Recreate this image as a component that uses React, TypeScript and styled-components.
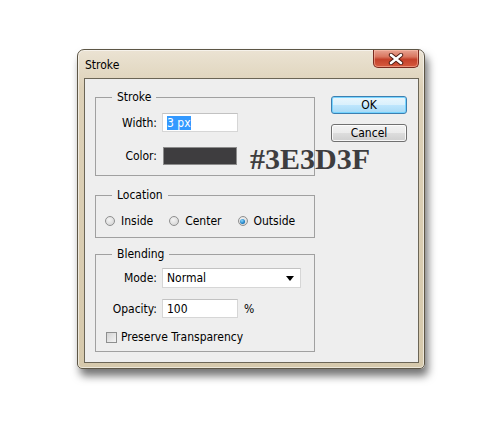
import { createGlobalStyle } from 'styled-components';
import styled from 'styled-components';

const GlobalStyle = createGlobalStyle`
  body {
    margin: 0;
    background: #ffffff;
    font-family: "DejaVu Sans Condensed", "DejaVu Sans", "Noto Sans", sans-serif;
    font-size: 11px;
    color: #000;
  }
`;

const Page = styled.div`
  width: 503px;
  height: 422px;
  padding: 49px 0 0 77px;
  box-sizing: border-box;
`;

const Frame = styled.div`
  width: 348px;
  height: 320px;
  box-sizing: border-box;
  border: 1px solid #5d5646;
  border-radius: 7px 7px 5px 5px;
  background: linear-gradient(180deg, #ebe3d3 0%, #ddd1b8 12%, #d6c9ac 100%);
  box-shadow: 3px 7px 9px rgba(0, 0, 0, 0.55), inset 0 0 0 1px rgba(255, 255, 255, 0.55);
  padding: 0 5px 5px 6px;
  display: flex;
  flex-direction: column;
`;

const TitleBar = styled.div`
  height: 28px;
  display: flex;
  align-items: flex-start;
  justify-content: space-between;
`;

const Title = styled.span`
  font-size: 12px;
  margin: 8px 0 0 1px;
`;

const CloseButton = styled.div`
  width: 46px;
  height: 18px;
  box-sizing: border-box;
  border: 1px solid #7a2a1f;
  border-top: none;
  border-radius: 0 0 5px 5px;
  background: linear-gradient(180deg, #e8a493 0%, #d9765f 40%, #c4412a 55%, #d75a3e 100%);
  box-shadow: inset 0 0 0 1px rgba(255, 200, 180, 0.5);
  display: flex;
  align-items: center;
  justify-content: center;
`;

const Client = styled.div`
  flex: 1;
  border: 1px solid #6b6556;
  background: #eeeeee;
  display: flex;
  padding: 11px 0 0 10px;
`;

const Groups = styled.div`
  width: 220px;
  flex-shrink: 0;
  display: flex;
  flex-direction: column;
`;

const Group = styled.fieldset<{ $top?: number; $pad: string }>`
  margin: ${(p) => p.$top ?? 0}px 0 0 0;
  padding: ${(p) => p.$pad};
  border: 1px solid #a0a0a0;
  min-width: 0;
`;

const Legend = styled.legend`
  padding: 0 5px;
  margin-left: 16px;
  font-size: 12px;
  line-height: 14px;
`;

const Row = styled.div<{ $top?: number; $h: number }>`
  display: flex;
  align-items: center;
  height: ${(p) => p.$h}px;
  margin-top: ${(p) => p.$top ?? 0}px;
`;

const Label = styled.label`
  width: 61px;
  flex-shrink: 0;
  text-align: right;
  margin-right: 5px;
  font-size: 12px;
`;

const TextBox = styled.div<{ $w: number }>`
  width: ${(p) => p.$w}px;
  flex-shrink: 0;
  height: 100%;
  box-sizing: border-box;
  background: #fff;
  border: 1px solid #d6d6d6;
  border-top-color: #c2c2c2;
  display: flex;
  align-items: center;
  padding-left: 4px;
  font-size: 12px;
`;

const Selected = styled.span`
  background: #3399ff;
  color: #fff;
`;

const Swatch = styled.div`
  width: 74px;
  flex-shrink: 0;
  height: 18px;
  margin-left: 1px;
  box-sizing: border-box;
  background: #3e3d3f;
  border: 1px solid #8c8c8c;
`;

const HexText = styled.span`
  font-family: "Liberation Serif", "Times New Roman", serif;
  font-weight: bold;
  font-size: 30px;
  line-height: 18px;
  color: #3e3d3f;
  margin: 6px 0 0 13px;
  white-space: nowrap;
  position: relative;
  z-index: 1;
`;

const Options = styled.div`
  display: flex;
  align-items: center;
  padding-left: 9px;
  gap: 16px;
`;

const Option = styled.label`
  display: flex;
  align-items: center;
  gap: 6px;
  font-size: 12px;
`;

const Radio = styled.span<{ $on?: boolean }>`
  width: 10px;
  height: 10px;
  border-radius: 50%;
  box-sizing: border-box;
  border: 1px solid #8e8f8f;
  background: radial-gradient(circle at 40% 35%, #f4f4f4 0%, #dadada 70%, #c8c8c8 100%);
  display: flex;
  align-items: center;
  justify-content: center;
  &::after {
    content: '';
    display: ${(p) => (p.$on ? 'block' : 'none')};
    width: 5px;
    height: 5px;
    border-radius: 50%;
    background: radial-gradient(circle at 40% 35%, #8ad8ff 0%, #1d80c4 60%, #0a4f8a 100%);
  }
`;

const Select = styled(TextBox)`
  justify-content: space-between;
  padding-right: 6px;
`;

const Percent = styled.span`
  margin-left: 6px;
  font-size: 12px;
`;

const Check = styled.span`
  width: 11px;
  height: 11px;
  box-sizing: border-box;
  border: 1px solid #8e8f8f;
  background: linear-gradient(135deg, #d4d4d4 0%, #f4f4f4 100%);
`;

const CheckRow = styled(Row)`
  padding-left: 10px;
  gap: 4px;
  font-size: 12px;
`;

const Buttons = styled.div`
  margin: 6px 0 0 16px;
  display: flex;
  flex-direction: column;
  gap: 10px;
`;

const Button = styled.div<{ $primary?: boolean }>`
  width: 76px;
  height: 18px;
  box-sizing: border-box;
  border-radius: 3px;
  border: 1px solid ${(p) => (p.$primary ? '#3c7fb1' : '#707070')};
  background: ${(p) =>
    p.$primary
      ? 'linear-gradient(180deg, #eaf6fd 0%, #d9f0fc 50%, #bee6fd 51%, #a7d9f5 100%)'
      : 'linear-gradient(180deg, #f2f2f2 0%, #ebebeb 50%, #dddddd 51%, #cfcfcf 100%)'};
  box-shadow: inset 0 0 0 1px ${(p) => (p.$primary ? 'rgba(110,210,255,0.9)' : 'rgba(255,255,255,0.8)')};
  display: flex;
  align-items: center;
  justify-content: center;
  font-size: 12px;
`;

const CloseIcon = () => (
  <svg width="16" height="12" viewBox="0 0 16 12">
    <path d="M3 2 L13 10 M13 2 L3 10" stroke="#4a1a12" strokeWidth="4.4" strokeLinecap="round" />
    <path d="M3 2 L13 10 M13 2 L3 10" stroke="#ffffff" strokeWidth="2.6" strokeLinecap="round" />
  </svg>
);

const Caret = () => (
  <svg width="8" height="5" viewBox="0 0 8 5">
    <path d="M0 0 H8 L4 5 Z" fill="#000" />
  </svg>
);

export default function App() {
  return (
    <Page>
      <GlobalStyle />
      <Frame>
        <TitleBar>
          <Title>Stroke</Title>
          <CloseButton>
            <CloseIcon />
          </CloseButton>
        </TitleBar>
        <Client>
          <Groups>
            <Group $pad="9px 0 10px 0">
              <Legend>Stroke</Legend>
              <Row $h={19}>
                <Label>Width:</Label>
                <TextBox $w={76}>
                  <Selected>3 px</Selected>
                </TextBox>
              </Row>
              <Row $h={18} $top={15}>
                <Label>Color:</Label>
                <Swatch />
                <HexText>#3E3D3F</HexText>
              </Row>
            </Group>
            <Group $top={12} $pad="11px 0 8px 0">
              <Legend>Location</Legend>
              <Row $h={16}>
                <Options>
                  <Option>
                    <Radio />
                    Inside
                  </Option>
                  <Option>
                    <Radio />
                    Center
                  </Option>
                  <Option>
                    <Radio $on />
                    Outside
                  </Option>
                </Options>
              </Row>
            </Group>
            <Group $top={9} $pad="7px 0 7px 0">
              <Legend>Blending</Legend>
              <Row $h={20}>
                <Label>Mode:</Label>
                <Select $w={139}>
                  Normal
                  <Caret />
                </Select>
              </Row>
              <Row $h={19} $top={11}>
                <Label>Opacity:</Label>
                <TextBox $w={76}>100</TextBox>
                <Percent>%</Percent>
              </Row>
              <CheckRow $h={14} $top={12}>
                <Check />
                Preserve Transparency
              </CheckRow>
            </Group>
          </Groups>
          <Buttons>
            <Button $primary>OK</Button>
            <Button>Cancel</Button>
          </Buttons>
        </Client>
      </Frame>
    </Page>
  );
}
